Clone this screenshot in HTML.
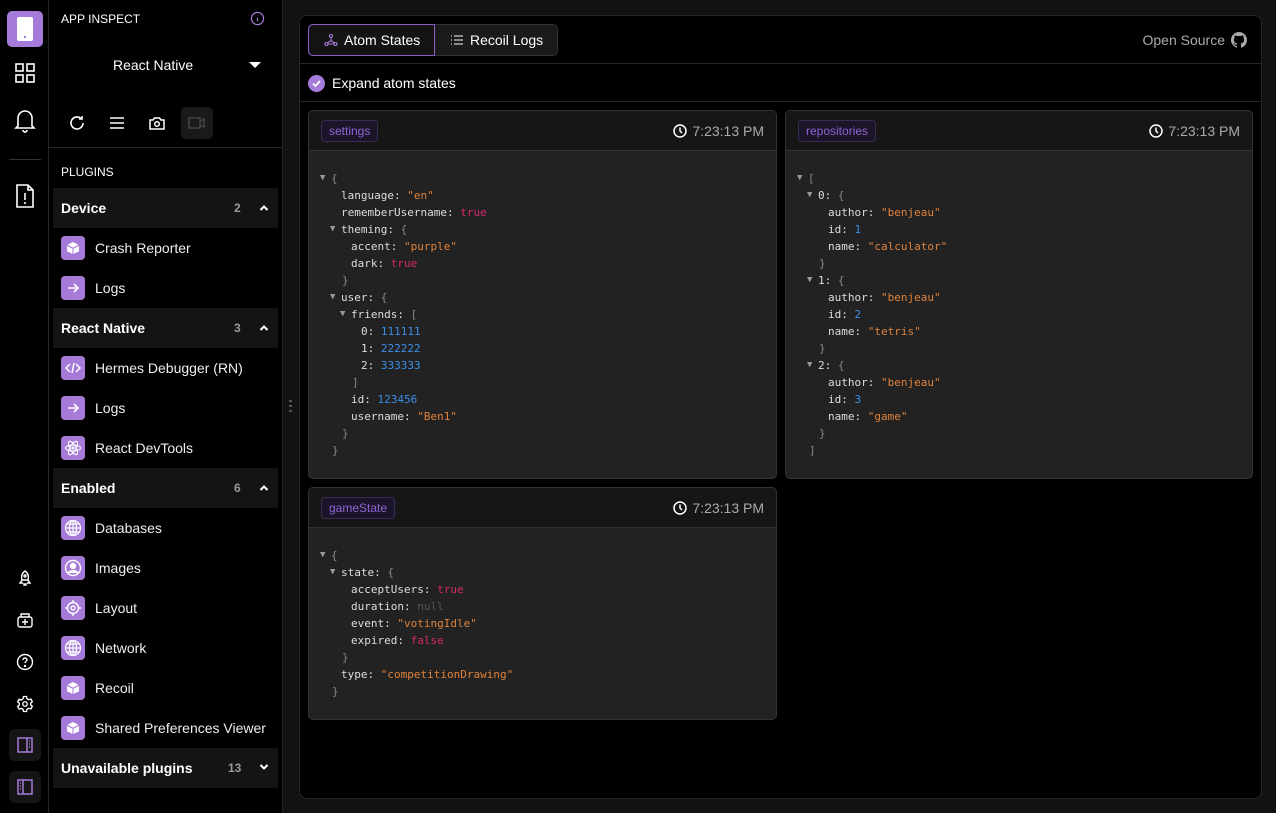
<!DOCTYPE html>
<html><head><meta charset="utf-8"><style>
*{box-sizing:border-box;margin:0;padding:0}
body{width:1276px;height:813px;background:#121212;font-family:"Liberation Sans",sans-serif;color:#fff;position:relative;overflow:hidden}
.rail{position:absolute;left:0;top:0;width:49px;height:813px;background:#000;border-right:1px solid #262626}
.side{position:absolute;left:49px;top:0;width:234px;height:813px;background:#000;border-right:1px solid #262626}
.ri{position:absolute;left:9px;width:32px;height:32px;display:flex;align-items:center;justify-content:center}
.main{position:absolute;left:299px;top:15px;width:963px;height:784px;background:#000;border:1px solid #262626;border-radius:8px}
.sec{position:absolute;left:4px;width:225px;height:40px;background:#141414;font-weight:bold;font-size:14px;display:flex;align-items:center;padding-left:8px}
.sec .n{position:absolute;left:181px;color:#999;font-size:12px}
.sec .c{position:absolute;left:206px;top:16px}
.it{position:absolute;left:12px;height:40px;display:flex;align-items:center;font-size:14px;color:#eee}
.ic{width:24px;height:24px;border-radius:4px;background:#a57ad8;margin-right:10px;display:flex;align-items:center;justify-content:center}
.card{position:absolute;background:#222;border:1px solid #333;border-radius:5px;overflow:hidden}
.ch{height:40px;background:#161616;border-bottom:1px solid #333;position:relative}
.tag{position:absolute;left:12px;top:9px;height:22px;padding:0 7px;border:1px solid #3a2a55;background:#1c1428;border-radius:4px;color:#8f65d6;font-size:12px;line-height:20px}
.tm{position:absolute;right:12px;top:12px;font-size:14px;color:#aaa;display:flex;align-items:center;gap:5px}
.code{padding-top:19px;font-family:"DejaVu Sans Mono","Liberation Mono",monospace;font-size:11px;line-height:17px;color:#ddd}
.l{white-space:pre;position:relative}
.t{position:absolute;margin-left:-11px;color:#999;font-size:9px}
.b{color:#888}.s{color:#e0823a}.k{color:#e0e0e0}.tr{color:#d6286e}.nu{color:#3b8eea}.nl{color:#555}
</style></head><body>
<div class="rail">
 <div class="ri" style="top:11px;background:#a57ad8;border-radius:5px;width:36px;height:36px;left:7px"><div style="width:16px;height:24px;background:#fff;border-radius:2px;position:relative"><div style="position:absolute;left:7px;bottom:3px;width:2px;height:2px;background:#a57ad8"></div></div></div>
 <div class="ri" style="top:57px"><svg width="22" height="22" viewBox="0 0 22 22" fill="none" stroke="#fff" stroke-width="1.6"><rect x="2" y="2" width="7" height="7"/><rect x="13" y="2" width="7" height="7"/><rect x="2" y="13" width="7" height="7"/><rect x="13" y="13" width="7" height="7"/></svg></div>
 <div class="ri" style="top:104px"><svg width="22" height="26" viewBox="0 0 22 26" fill="none" stroke="#fff" stroke-width="1.6"><path d="M4 19V11a7 7 0 0114 0v8l2 2H2z"/><path d="M9 23a2 2 0 004 0"/></svg></div>
 <div style="position:absolute;left:9px;top:159px;width:32px;height:1px;background:#333"></div>
 <div class="ri" style="top:180px"><svg width="22" height="26" viewBox="0 0 22 26" fill="none" stroke="#fff" stroke-width="1.6"><path d="M3 2h11l5 5v17H3z"/><path d="M14 2v5h5"/><path d="M11 10v7M11 19v2"/></svg></div>
 <div class="ri" style="top:562px"><svg width="18" height="18" viewBox="0 0 18 18" fill="none" stroke="#fff" stroke-width="1.4"><path d="M9 2c3 2 4 5 3 9H6C5 7 6 4 9 2z"/><path d="M6 11l-2 3h3M12 11l2 3h-3M8 14v2h2v-2"/><circle cx="9" cy="7" r="1"/></svg></div>
 <div class="ri" style="top:604px"><svg width="18" height="18" viewBox="0 0 18 18" fill="none" stroke="#fff" stroke-width="1.4"><rect x="2" y="6" width="14" height="10" rx="2"/><path d="M5 6V3h8v3M9 8v6M6 11h6"/></svg></div>
 <div class="ri" style="top:646px"><svg width="18" height="18" viewBox="0 0 18 18" fill="none" stroke="#fff" stroke-width="1.4"><circle cx="9" cy="9" r="7.5"/><path d="M7 7a2 2 0 114 0c0 1.5-2 1.5-2 3"/><circle cx="9" cy="13" r=".5"/></svg></div>
 <div class="ri" style="top:688px"><svg width="18" height="18" viewBox="0 0 24 24" fill="none" stroke="#fff" stroke-width="1.8"><circle cx="12" cy="12" r="3"/><path d="M10 2h4l.6 3 2.4 1.4 2.8-1 2 3.4-2.2 2v2.4l2.2 2-2 3.4-2.8-1-2.4 1.4-.6 3h-4l-.6-3L7 17.8l-2.8 1-2-3.4 2.2-2v-2.4l-2.2-2 2-3.4 2.8 1L9.4 5z"/></svg></div>
 <div class="ri" style="top:729px;background:#151515;border-radius:6px"><svg width="18" height="18" viewBox="0 0 18 18" fill="none" stroke="#a57ad8" stroke-width="1.5"><rect x="2" y="2" width="14" height="14"/><path d="M11 2v14M13 5h1M13 8h1M13 11h1"/></svg></div>
 <div class="ri" style="top:771px;background:#151515;border-radius:6px"><svg width="18" height="18" viewBox="0 0 18 18" fill="none" stroke="#a57ad8" stroke-width="1.5"><rect x="2" y="2" width="14" height="14"/><path d="M7 2v14M4 5h1M4 8h1M4 11h1"/></svg></div>
</div>
<div class="side">
 <div style="position:absolute;left:12px;top:12px;font-size:12px">APP INSPECT</div>
 <svg style="position:absolute;left:201px;top:11px" width="15" height="15" viewBox="0 0 16 16" fill="none" stroke="#a57ad8" stroke-width="1.3"><circle cx="8" cy="8" r="6.5"/><path d="M8 7v4M8 5v.5"/></svg>
 <div style="position:absolute;left:64px;top:57px;font-size:14px">React Native</div>
 <div style="position:absolute;left:200px;top:62px;border-left:6px solid transparent;border-right:6px solid transparent;border-top:6px solid #fff"></div>
 <svg style="position:absolute;left:18px;top:113px" width="20" height="20" viewBox="0 0 20 20" fill="none" stroke="#fff" stroke-width="1.6"><path d="M16 10a6 6 0 11-2-4.5"/><path d="M15 3v3h-3"/></svg>
 <svg style="position:absolute;left:58px;top:113px" width="20" height="20" viewBox="0 0 20 20" stroke="#fff" stroke-width="1.6"><path d="M3 5h14M3 10h14M3 15h14"/></svg>
 <svg style="position:absolute;left:98px;top:113px" width="20" height="20" viewBox="0 0 20 20" fill="none" stroke="#fff" stroke-width="1.5"><path d="M3 7h3l1.5-2h5L14 7h3v9H3z"/><circle cx="10" cy="11" r="2.3"/></svg>
 <div style="position:absolute;left:132px;top:107px;width:32px;height:32px;background:#1a1a1a;border-radius:5px"><svg style="margin:6px" width="20" height="20" viewBox="0 0 20 20" fill="none" stroke="#444" stroke-width="1.5"><rect x="2" y="5" width="11" height="10"/><path d="M13 8l4-2v8l-4-2"/></svg></div>
 <div style="position:absolute;left:0;top:147px;width:234px;height:1px;background:#262626"></div>
 <div style="position:absolute;left:12px;top:165px;font-size:12px">PLUGINS</div>

 <div class="sec" style="top:188px">Device<span class="n">2</span><svg class="c" width="10" height="8" viewBox="0 0 10 8" fill="none" stroke="#fff" stroke-width="2"><path d="M1.5 6L5 2.5 8.5 6"/></svg></div>
 <div class="it" style="top:228px"><div class="ic"><svg width="14" height="14" viewBox="0 0 14 14" fill="#fff"><path d="M7 1l5.5 2.8L7 6.6 1.5 3.8zM1 4.8l5.5 2.8V13L1 10.2zM13 4.8V10.2L7.5 13V7.6z"/></svg></div>Crash Reporter</div>
 <div class="it" style="top:268px"><div class="ic"><svg width="14" height="14" viewBox="0 0 14 14" fill="none" stroke="#fff" stroke-width="1.6"><path d="M2 7h10M8 3l4 4-4 4"/></svg></div>Logs</div>
 <div class="sec" style="top:308px">React Native<span class="n">3</span><svg class="c" width="10" height="8" viewBox="0 0 10 8" fill="none" stroke="#fff" stroke-width="2"><path d="M1.5 6L5 2.5 8.5 6"/></svg></div>
 <div class="it" style="top:348px"><div class="ic"><svg width="16" height="14" viewBox="0 0 16 14" fill="none" stroke="#fff" stroke-width="1.5"><path d="M5 3L1 7l4 4M11 3l4 4-4 4M9 2L7 12"/></svg></div>Hermes Debugger (RN)</div>
 <div class="it" style="top:388px"><div class="ic"><svg width="14" height="14" viewBox="0 0 14 14" fill="none" stroke="#fff" stroke-width="1.6"><path d="M2 7h10M8 3l4 4-4 4"/></svg></div>Logs</div>
 <div class="it" style="top:428px"><div class="ic"><svg width="18" height="18" viewBox="0 0 18 18" fill="none" stroke="#fff" stroke-width="1.1"><ellipse cx="9" cy="9" rx="7.5" ry="3"/><ellipse cx="9" cy="9" rx="7.5" ry="3" transform="rotate(60 9 9)"/><ellipse cx="9" cy="9" rx="7.5" ry="3" transform="rotate(120 9 9)"/><circle cx="9" cy="9" r="1" fill="#fff"/></svg></div>React DevTools</div>
 <div class="sec" style="top:468px">Enabled<span class="n">6</span><svg class="c" width="10" height="8" viewBox="0 0 10 8" fill="none" stroke="#fff" stroke-width="2"><path d="M1.5 6L5 2.5 8.5 6"/></svg></div>
 <div class="it" style="top:508px"><div class="ic"><svg width="18" height="18" viewBox="0 0 18 18" fill="none" stroke="#fff" stroke-width="1.2"><circle cx="9" cy="9" r="7.5"/><ellipse cx="9" cy="9" rx="3.5" ry="7.5"/><path d="M1.5 9h15M3 5h12M3 13h12M9 1.5v15"/></svg></div>Databases</div>
 <div class="it" style="top:548px"><div class="ic"><svg width="18" height="18" viewBox="0 0 18 18" fill="none" stroke="#fff" stroke-width="1.4"><circle cx="9" cy="9" r="7.5"/><circle cx="9" cy="7" r="2.5" fill="#fff"/><path d="M4 14c2-3 8-3 10 0" fill="#fff"/></svg></div>Images</div>
 <div class="it" style="top:588px"><div class="ic"><svg width="18" height="18" viewBox="0 0 18 18" fill="none" stroke="#fff" stroke-width="1.4"><circle cx="9" cy="9" r="5.5"/><circle cx="9" cy="9" r="2"/><path d="M9 1v3M9 14v3M1 9h3M14 9h3"/></svg></div>Layout</div>
 <div class="it" style="top:628px"><div class="ic"><svg width="18" height="18" viewBox="0 0 18 18" fill="none" stroke="#fff" stroke-width="1.2"><circle cx="9" cy="9" r="7.5"/><ellipse cx="9" cy="9" rx="3.5" ry="7.5"/><path d="M1.5 9h15M3 5h12M3 13h12M9 1.5v15"/></svg></div>Network</div>
 <div class="it" style="top:668px"><div class="ic"><svg width="14" height="14" viewBox="0 0 14 14" fill="#fff"><path d="M7 1l5.5 2.8L7 6.6 1.5 3.8zM1 4.8l5.5 2.8V13L1 10.2zM13 4.8V10.2L7.5 13V7.6z"/></svg></div>Recoil</div>
 <div class="it" style="top:708px"><div class="ic"><svg width="14" height="14" viewBox="0 0 14 14" fill="#fff"><path d="M7 1l5.5 2.8L7 6.6 1.5 3.8zM1 4.8l5.5 2.8V13L1 10.2zM13 4.8V10.2L7.5 13V7.6z"/></svg></div>Shared Preferences Viewer</div>
 <div class="sec" style="top:748px">Unavailable plugins<span class="n" style="left:175px">13</span><svg class="c" width="10" height="8" viewBox="0 0 10 8" fill="none" stroke="#fff" stroke-width="2" style="top:15px"><path d="M1.5 2L5 5.5 8.5 2"/></svg></div>
</div>
<div style="position:absolute;left:289px;top:400px;width:3px;height:14px;background:repeating-linear-gradient(#555 0 2px,transparent 2px 5px)"></div>

<div class="main">
 <div style="position:absolute;left:8px;top:8px;width:250px;height:32px;border:1px solid #333;border-radius:5px;background:#1a1a1a"></div>
 <div style="position:absolute;left:8px;top:8px;width:127px;height:32px;border:1px solid #8a60c8;border-radius:5px 0 0 5px;background:#141414;display:flex;align-items:center;padding-left:15px;font-size:14px"><svg width="14" height="14" viewBox="0 0 14 14" fill="none" stroke="#a57ad8" stroke-width="1.1" style="margin-right:6px"><circle cx="7" cy="3" r="1.5"/><circle cx="2.5" cy="11" r="1.5"/><circle cx="11.5" cy="11" r="1.5"/><path d="M7 4.5v3L3.5 10M7 7.5l3.5 2.5M4 11h6"/></svg>Atom States</div>
 <div style="position:absolute;left:150px;top:8px;height:32px;display:flex;align-items:center;font-size:14px"><svg width="14" height="14" viewBox="0 0 14 14" stroke="#ccc" stroke-width="1.2" style="margin-right:6px"><path d="M1 3h1M1 7h1M1 11h1M4 3h9M4 7h9M4 11h9"/></svg>Recoil Logs</div>
 <div style="position:absolute;right:14px;top:16px;font-size:14px;color:#aaa;display:flex;align-items:center;gap:6px">Open Source <svg width="16" height="16" viewBox="0 0 16 16" fill="#aaa"><path d="M8 0C3.58 0 0 3.58 0 8c0 3.540 2.29 6.53 5.47 7.59.4.07.55-.17.55-.38v-1.33c-2.23.48-2.7-1.07-2.7-1.07-.36-.92-.89-1.17-.89-1.17-.73-.5.05-.49.05-.49.8.06 1.23.83 1.23.83.72 1.22 1.87.87 2.330.66.07-.52.28-.87.5-1.070-1.78-.2-3.64-.89-3.64-3.95 0-.87.31-1.59.82-2.15-.08-.2-.36-1.02.08-2.12 0 0 .67-.21 2.2.82a7.6 7.6 0 014 0c1.53-1.04 2.2-.82 2.2-.82.44 1.1.16 1.92.08 2.12.51.56.82 1.27.82 2.15 0 3.07-1.87 3.75-3.65 3.95.29.25.54.73.54 1.48v2.2c0 .21.15.46.55.38A8 8 0 0016 8c0-4.42-3.58-8-8-8z"/></svg></div>
 <div style="position:absolute;left:0;top:47px;width:961px;height:1px;background:#262626"></div>
 <div style="position:absolute;left:8px;top:59px;width:17px;height:17px;border-radius:50%;background:#a57ad8"><svg width="17" height="17" viewBox="0 0 17 17" fill="none" stroke="#fff" stroke-width="1.8"><path d="M5 8.5l2.5 2.5L12 6"/></svg></div>
 <div style="position:absolute;left:32px;top:59px;font-size:14px">Expand atom states</div>
 <div style="position:absolute;left:0;top:85px;width:961px;height:1px;background:#262626"></div>
</div>

<div class="card" style="left:308px;top:110px;width:469px;height:369px">
 <div class="ch"><span class="tag">settings</span><span class="tm"><svg width="14" height="14" viewBox="0 0 14 14" fill="none" stroke="#fff" stroke-width="1.5"><circle cx="7" cy="7" r="6"/><path d="M7 3.5V7l2 2"/></svg>7:23:13 PM</span></div>
 <div class="code" style="padding-left:22px">
<div class="l" style="padding-left:0"><span class="t">▼</span><span class="b">{</span></div>
<div class="l" style="padding-left:10px">language: <span class="s">"en"</span></div>
<div class="l" style="padding-left:10px">rememberUsername: <span class="tr">true</span></div>
<div class="l" style="padding-left:10px"><span class="t">▼</span>theming: <span class="b">{</span></div>
<div class="l" style="padding-left:20px">accent: <span class="s">"purple"</span></div>
<div class="l" style="padding-left:20px">dark: <span class="tr">true</span></div>
<div class="l" style="padding-left:11px"><span class="b">}</span></div>
<div class="l" style="padding-left:10px"><span class="t">▼</span>user: <span class="b">{</span></div>
<div class="l" style="padding-left:20px"><span class="t">▼</span>friends: <span class="b">[</span></div>
<div class="l" style="padding-left:30px">0: <span class="nu">111111</span></div>
<div class="l" style="padding-left:30px">1: <span class="nu">222222</span></div>
<div class="l" style="padding-left:30px">2: <span class="nu">333333</span></div>
<div class="l" style="padding-left:21px"><span class="b">]</span></div>
<div class="l" style="padding-left:20px">id: <span class="nu">123456</span></div>
<div class="l" style="padding-left:20px">username: <span class="s">"Ben1"</span></div>
<div class="l" style="padding-left:11px"><span class="b">}</span></div>
<div class="l" style="padding-left:1px"><span class="b">}</span></div>
 </div>
</div>

<div class="card" style="left:785px;top:110px;width:468px;height:369px">
 <div class="ch"><span class="tag">repositories</span><span class="tm"><svg width="14" height="14" viewBox="0 0 14 14" fill="none" stroke="#fff" stroke-width="1.5"><circle cx="7" cy="7" r="6"/><path d="M7 3.5V7l2 2"/></svg>7:23:13 PM</span></div>
 <div class="code" style="padding-left:22px">
<div class="l"><span class="t">▼</span><span class="b">[</span></div>
<div class="l" style="padding-left:10px"><span class="t">▼</span>0: <span class="b">{</span></div>
<div class="l" style="padding-left:20px">author: <span class="s">"benjeau"</span></div>
<div class="l" style="padding-left:20px">id: <span class="nu">1</span></div>
<div class="l" style="padding-left:20px">name: <span class="s">"calculator"</span></div>
<div class="l" style="padding-left:11px"><span class="b">}</span></div>
<div class="l" style="padding-left:10px"><span class="t">▼</span>1: <span class="b">{</span></div>
<div class="l" style="padding-left:20px">author: <span class="s">"benjeau"</span></div>
<div class="l" style="padding-left:20px">id: <span class="nu">2</span></div>
<div class="l" style="padding-left:20px">name: <span class="s">"tetris"</span></div>
<div class="l" style="padding-left:11px"><span class="b">}</span></div>
<div class="l" style="padding-left:10px"><span class="t">▼</span>2: <span class="b">{</span></div>
<div class="l" style="padding-left:20px">author: <span class="s">"benjeau"</span></div>
<div class="l" style="padding-left:20px">id: <span class="nu">3</span></div>
<div class="l" style="padding-left:20px">name: <span class="s">"game"</span></div>
<div class="l" style="padding-left:11px"><span class="b">}</span></div>
<div class="l" style="padding-left:1px"><span class="b">]</span></div>
 </div>
</div>

<div class="card" style="left:308px;top:487px;width:469px;height:233px">
 <div class="ch"><span class="tag">gameState</span><span class="tm"><svg width="14" height="14" viewBox="0 0 14 14" fill="none" stroke="#fff" stroke-width="1.5"><circle cx="7" cy="7" r="6"/><path d="M7 3.5V7l2 2"/></svg>7:23:13 PM</span></div>
 <div class="code" style="padding-left:22px">
<div class="l"><span class="t">▼</span><span class="b">{</span></div>
<div class="l" style="padding-left:10px"><span class="t">▼</span>state: <span class="b">{</span></div>
<div class="l" style="padding-left:20px">acceptUsers: <span class="tr">true</span></div>
<div class="l" style="padding-left:20px">duration: <span class="nl">null</span></div>
<div class="l" style="padding-left:20px">event: <span class="s">"votingIdle"</span></div>
<div class="l" style="padding-left:20px">expired: <span class="tr">false</span></div>
<div class="l" style="padding-left:11px"><span class="b">}</span></div>
<div class="l" style="padding-left:10px">type: <span class="s">"competitionDrawing"</span></div>
<div class="l" style="padding-left:1px"><span class="b">}</span></div>
 </div>
</div>
</body></html>
